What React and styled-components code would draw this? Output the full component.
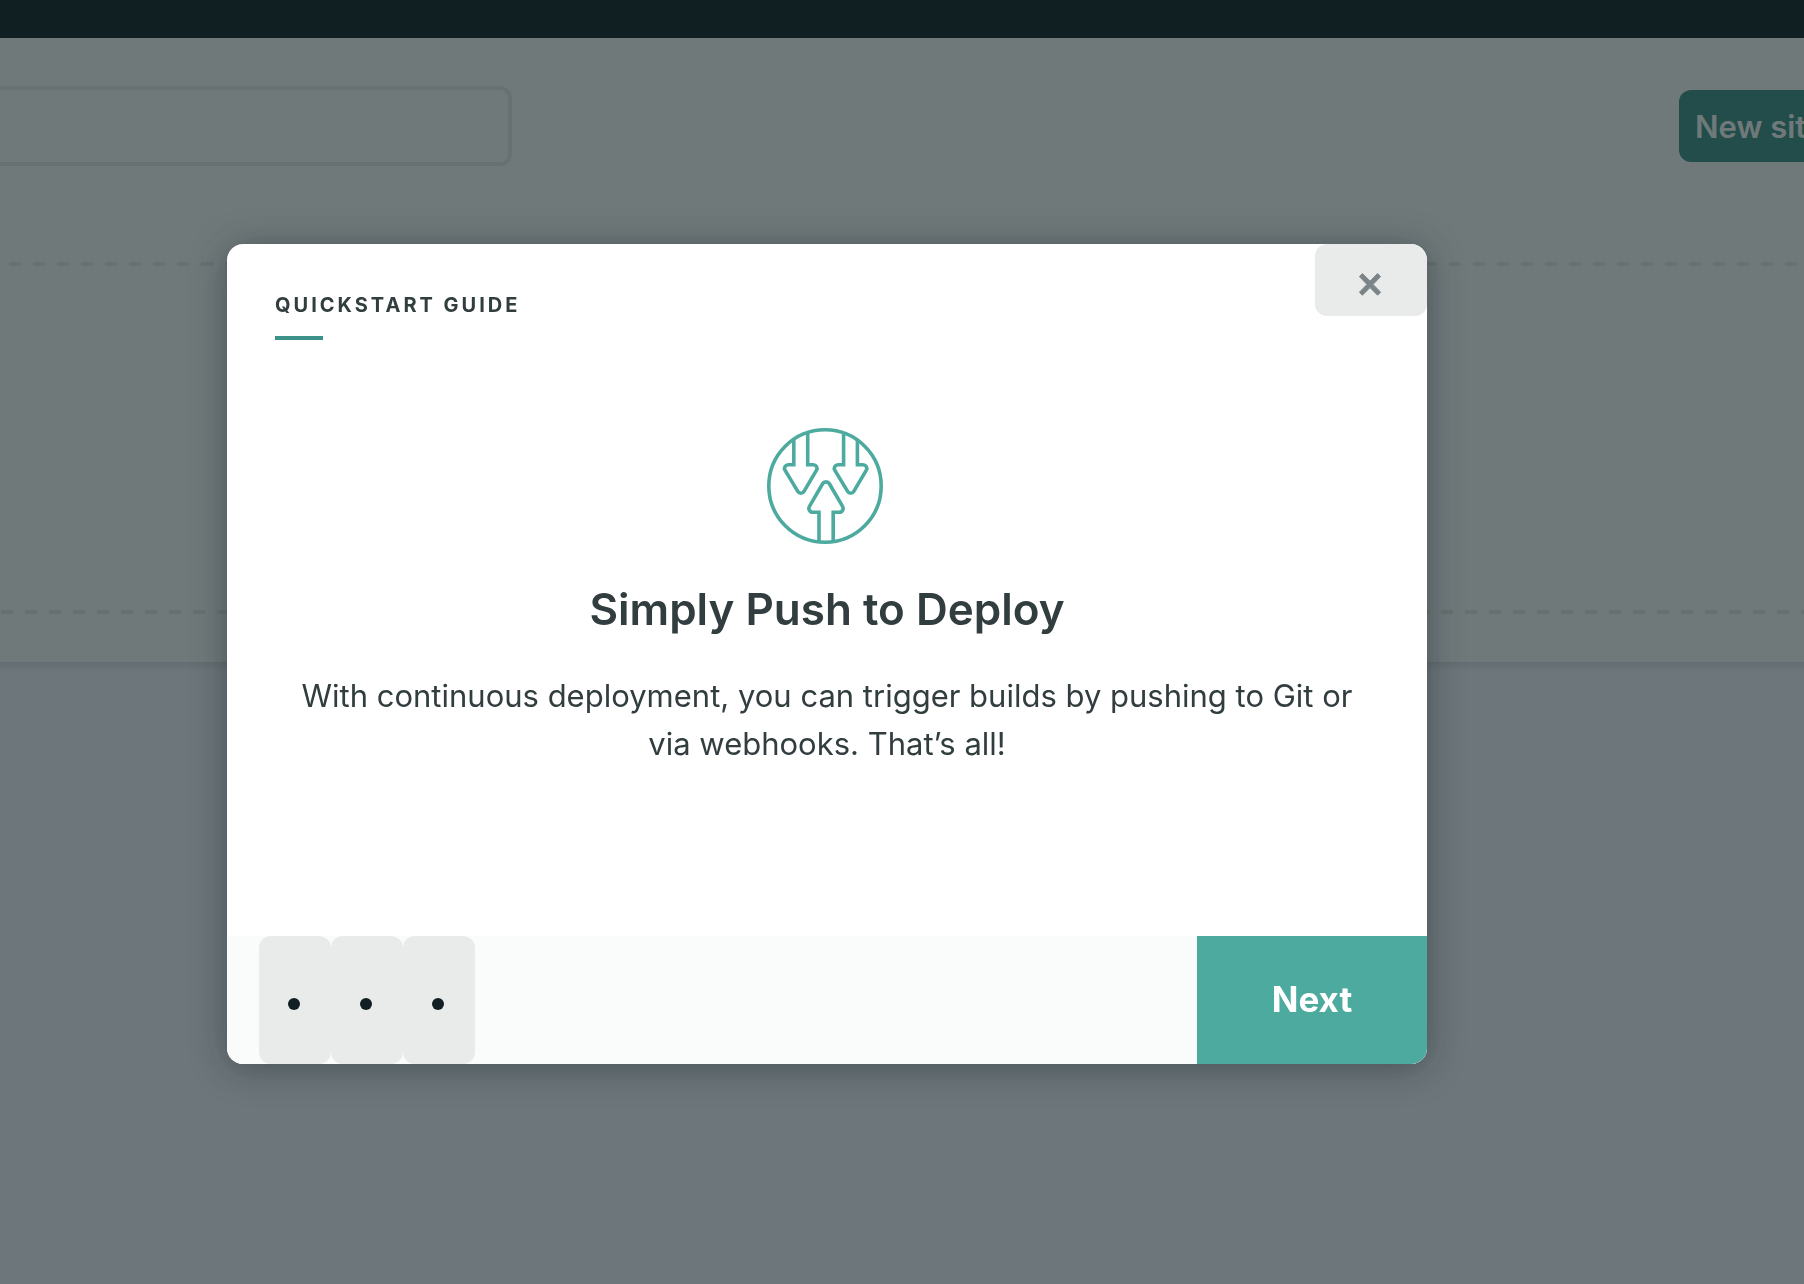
import React from "react";
import styled, { createGlobalStyle } from "styled-components";

const GlobalStyle = createGlobalStyle`
  *, *::before, *::after { box-sizing: border-box; }
  body {
    margin: 0;
    background: #f8f8ff;
    color: #313d3e;
    font-family: Inter, "Liberation Sans", sans-serif;
    -webkit-font-smoothing: antialiased;
  }
  button, input { font: inherit; }
`;

const Page = styled.div`
  min-height: 100vh;
  overflow: hidden;
  background: #f8f8ff;
`;

const NavBar = styled.header`
  height: 38px;
  background: #111f24;
`;

const SitesCard = styled.section`
  margin: 0 -16px;
  padding: 48px 16px;
  background: #ffffff;
  box-shadow: 0 4px 8px rgba(14, 30, 37, 0.12);
`;

const Toolbar = styled.div`
  display: flex;
  align-items: center;
  justify-content: space-between;
  gap: 24px;
`;

const SearchInput = styled.input`
  flex: 0 1 512px;
  min-width: 0;
  height: 80px;
  padding: 0 24px;
  border: 4px solid #e9ebea;
  border-left: 0;
  border-radius: 0 12px 12px 0;
  background: transparent;
  color: inherit;
  font-size: 31px;
`;

const NewSiteButton = styled.button`
  flex: 0 0 125px;
  height: 72px;
  padding: 0 0 0 16px;
  overflow: hidden;
  border: 0;
  border-radius: 12px 0 0 12px;
  background: #3d9287;
  color: #ffffff;
  font-size: 31px;
  font-weight: 600;
  text-align: left;
  white-space: nowrap;
`;

const DashedLine = styled.div`
  height: 4px;
  background: repeating-linear-gradient(
    to right,
    #e9ebea 0 12px,
    transparent 12px 24px
  );
  background-position: ${(p) => p.$start}px 0;
  background-size: 24px 4px;
`;

const DropZone = styled.div`
  display: flex;
  flex-direction: column;
  justify-content: space-between;
  height: 352px;
  margin-top: 96px;
`;

const Overlay = styled.div`
  position: fixed;
  inset: 0;
  display: flex;
  align-items: center;
  justify-content: center;
  padding: 24px 150px 0 0;
  background: rgba(17, 31, 34, 0.6);
`;

const Modal = styled.div`
  position: relative;
  display: flex;
  flex-direction: column;
  width: 100%;
  max-width: 1200px;
  min-height: 820px;
  overflow: hidden;
  border-radius: 16px;
  background: #ffffff;
  box-shadow: 0 4px 36px rgba(14, 30, 37, 0.42);
`;

const ModalHeader = styled.div`
  padding: 48px 48px 0;
`;

const Eyebrow = styled.h2`
  margin: 0;
  font-size: 20px;
  font-weight: 700;
  line-height: 26px;
  letter-spacing: 3px;
  text-transform: uppercase;

  &::after {
    content: "";
    display: block;
    width: 48px;
    height: 4px;
    margin-top: 18px;
    background: #3d9287;
  }
`;

const CloseButton = styled.button`
  position: absolute;
  top: 0;
  right: 0;
  display: flex;
  align-items: center;
  justify-content: center;
  width: 112px;
  height: 72px;
  padding: 8px 0 0;
  border: 0;
  border-radius: 12px;
  background: #e9ebea;
  color: #7c8488;
`;

const Step = styled.div`
  display: flex;
  flex: 1;
  flex-direction: column;
  align-items: center;
  padding: 84px 72px 0;
  text-align: center;
`;

const Title = styled.h1`
  margin: 32px 0 34px;
  font-size: 44px;
  font-weight: 600;
  line-height: 58px;
`;

const Description = styled.p`
  margin: 0;
  font-size: 31px;
  line-height: 48px;
`;

const ModalFooter = styled.footer`
  display: flex;
  justify-content: space-between;
  height: 128px;
  padding-left: 32px;
  background: #fafcfb;
`;

const Steps = styled.nav`
  display: flex;
`;

const StepButton = styled.button`
  display: flex;
  align-items: center;
  justify-content: center;
  width: 72px;
  padding: 8px 2px 0 0;
  border: 0;
  border-radius: 12px;
  background: #e9ebea;
`;

const Dot = styled.span`
  width: 12px;
  height: 12px;
  border-radius: 50%;
  background: #111f24;
`;

const NextButton = styled.button`
  width: 230px;
  padding: 0 0 2px;
  border: 0;
  background: #4daa9f;
  color: #ffffff;
  font-size: 35px;
  font-weight: 700;
`;

const PushIcon = () => (
  <svg
    width="124"
    height="124"
    viewBox="0 0 124 124"
    fill="none"
    stroke="#4daa9f"
    strokeWidth="3.6"
    aria-hidden="true"
  >
    <circle cx="60" cy="62" r="56.2" />
    <path d="M28.8 15.5V40.7H23.4c-3.2 0-4.9 3-3.3 5.7L32.8 67.3c1.5 2.6 4.7 2.6 6.2 0L51.4 46.4c1.6-2.7 0-5.7-3.3-5.7H42.7V9" />
    <path d="M78.6 9V40.7H73.2c-3.2 0-4.9 3-3.3 5.7L82.6 67.3c1.5 2.6 4.7 2.6 6.2 0L101.2 46.4c1.6-2.7 0-5.7-3.3-5.7H92.4V15.5" />
    <path d="M54 118V88.3H48.1c-3.4 0-5.3-3.2-3.5-6.2L57.6 59.8c1.6-2.6 5.2-2.6 6.8 0L77.4 82.1c1.8 3 0 6.2-3.5 6.2H68.2V118" />
  </svg>
);

const CloseIcon = () => (
  <svg
    width="24"
    height="24"
    viewBox="0 0 24 24"
    fill="currentColor"
    stroke="currentColor"
    strokeWidth="1"
    strokeLinejoin="round"
    aria-hidden="true"
  >
    <path d="M3.4 1.6L11 9.2l7.6-7.6 3 3L14 12.4l7.6 7.8-3 3L11 15.6l-7.6 7.6-3-3L8 12.4.4 4.6z" />
  </svg>
);

export default function App() {
  return (
    <>
      <GlobalStyle />
      <Page>
        <NavBar />
        <SitesCard>
          <Toolbar>
            <SearchInput type="search" aria-label="Search sites" />
            <NewSiteButton type="button">New site</NewSiteButton>
          </Toolbar>
          <DropZone>
            <DashedLine $start={9} />
            <DashedLine $start={1} />
          </DropZone>
        </SitesCard>
      </Page>
      <Overlay>
        <Modal role="dialog" aria-modal="true" aria-labelledby="guide-label">
          <ModalHeader>
            <Eyebrow id="guide-label">Quickstart guide</Eyebrow>
          </ModalHeader>
          <CloseButton type="button" aria-label="Close">
            <CloseIcon />
          </CloseButton>
          <Step>
            <PushIcon />
            <Title>Simply Push to Deploy</Title>
            <Description>
              With continuous deployment, you can trigger builds by pushing to
              Git or via webhooks. That’s all!
            </Description>
          </Step>
          <ModalFooter>
            <Steps aria-label="Guide steps">
              {[1, 2, 3].map((n) => (
                <StepButton key={n} type="button" aria-label={`Step ${n}`}>
                  <Dot />
                </StepButton>
              ))}
            </Steps>
            <NextButton type="button">Next</NextButton>
          </ModalFooter>
        </Modal>
      </Overlay>
    </>
  );
}
